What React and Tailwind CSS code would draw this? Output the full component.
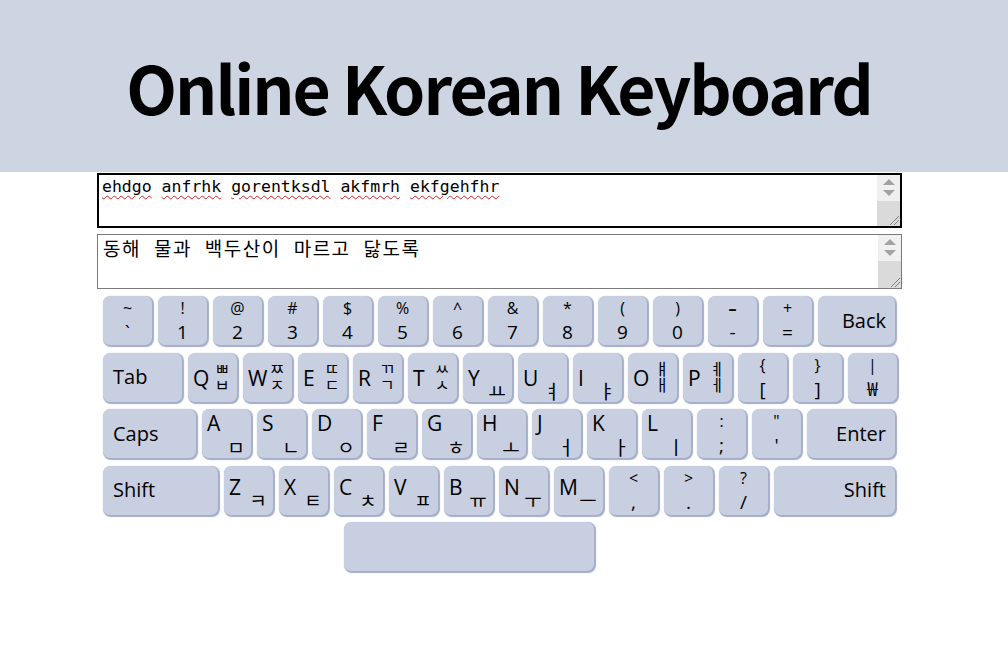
import React from 'react'

// Key geometry: 49px keys + 2px shadow, 55px pitch
const keyBase = 'h-[49px] shrink-0 rounded-[7px] bg-[#c8cfe0] shadow-[1px_1px_1px_1px_#a3adca] text-black'
const keyFont = { fontFamily: "'Open Sans', 'Noto Sans CJK KR', sans-serif" }
const jamoFont = { fontFamily: "'Noto Sans CJK KR', 'Open Sans', sans-serif" }

function SymKey({ top, bottom, topClass = '' }) {
    return (
        <div className={`${keyBase} w-[49px] flex flex-col items-center pt-[4px]`} style={keyFont}>
            <span className={`text-[16px] leading-[16px] ${topClass}`}>{top}</span>
            <span className="text-[19px] leading-[19px] mt-[7px]">{bottom}</span>
        </div>
    )
}

const letterMt = {
    pair: 'mt-[15px]',
    single: 'mt-[15px]',
    row3: 'mt-[4px]',
    row4: 'mt-[11px]',
}

// jamo column: size + offset per layout
const jamoCls = {
    pair: 'mt-[8px] text-[16px] leading-[15px] gap-[1px]',
    single: 'mt-[31px] text-[19px] leading-[14.5px]',
    row3: 'mt-[31px] text-[19px] leading-[14.5px]',
    row4: 'mt-[27px] text-[19px] leading-[14.5px]',
}

function LetterKey({ letter, top, bottom, variant }) {
    return (
        <div className={`${keyBase} w-[49px] flex`}>
            <span className={`w-[24px] shrink-0 pl-[5px] text-[21px] leading-[21px] ${letterMt[variant]}`} style={keyFont}>
                {letter}
            </span>
            <span className={`w-[20px] shrink-0 flex flex-col items-center ${jamoCls[variant]}`} style={jamoFont}>
                {top && <span>{top}</span>}
                <span>{bottom}</span>
            </span>
        </div>
    )
}

function WideKey({ label, width, right }) {
    return (
        <div
            className={`${keyBase} ${width} flex items-center text-[20px] ${right ? 'justify-end pr-[9px]' : 'pl-[10px]'}`}
            style={keyFont}
        >
            {label}
        </div>
    )
}

// fake textarea scrollbar + resize grip
function Scrollbar() {
    return (
        <div className="w-[23px] shrink-0 flex flex-col bg-[#f0f0f0]">
            <div className="flex flex-col items-center gap-[5px] pt-[4px] h-[26px]">
                <div className="w-0 h-0 border-l-[6px] border-r-[6px] border-b-[6px] border-l-transparent border-r-transparent border-b-[#a3a3a3]"></div>
                <div className="w-0 h-0 border-l-[6px] border-r-[6px] border-t-[6px] border-l-transparent border-r-transparent border-t-[#a3a3a3]"></div>
            </div>
            <div className="flex-1 bg-[#dadada] flex items-end justify-end">
                <svg width="12" height="12" viewBox="0 0 12 12">
                    <path d="M11 2 L2 11 M11 6 L6 11" stroke="#808080" strokeWidth="1" />
                </svg>
            </div>
        </div>
    )
}

const row2 = [
    ['Q', 'ㅃ', 'ㅂ', 'pair'],
    ['W', 'ㅉ', 'ㅈ', 'pair'],
    ['E', 'ㄸ', 'ㄷ', 'pair'],
    ['R', 'ㄲ', 'ㄱ', 'pair'],
    ['T', 'ㅆ', 'ㅅ', 'pair'],
    ['Y', null, 'ㅛ', 'single'],
    ['U', null, 'ㅕ', 'single'],
    ['I', null, 'ㅑ', 'single'],
    ['O', 'ㅒ', 'ㅐ', 'pair'],
    ['P', 'ㅖ', 'ㅔ', 'pair'],
]

const row3 = [['A', 'ㅁ'], ['S', 'ㄴ'], ['D', 'ㅇ'], ['F', 'ㄹ'], ['G', 'ㅎ'], ['H', 'ㅗ'], ['J', 'ㅓ'], ['K', 'ㅏ'], ['L', 'ㅣ']]
const row4 = [['Z', 'ㅋ'], ['X', 'ㅌ'], ['C', 'ㅊ'], ['V', 'ㅍ'], ['B', 'ㅠ'], ['N', 'ㅜ'], ['M', 'ㅡ']]

const numbers = [
    ['~', '`'], ['!', '1'], ['@', '2'], ['#', '3'], ['$', '4'], ['%', '5'], ['^', '6'],
    ['&', '7'], ['*', '8'], ['(', '9'], [')', '0'],
]

const latinWords = ['ehdgo', 'anfrhk', 'gorentksdl', 'akfmrh', 'ekfgehfhr']

export default function App() {
    return (
        <div className="min-h-[645px] bg-white">
            <header className="h-[172px] bg-[#ced5e2] flex items-center justify-center pr-[10px]">
                <h1
                    className="text-[66px] font-bold text-black leading-none tracking-[-2px]"
                    style={{ fontFamily: "'Noto Sans CJK KR', 'Open Sans', sans-serif" }}
                >
                    Online Korean Keyboard
                </h1>
            </header>

            {/* Input boxes */}
            <div className="ml-[97px] w-[805px] mt-[1px] flex flex-col gap-[6px]">
                <div className="h-[55px] border-2 border-black flex bg-white">
                    <div
                        className="flex-1 px-[3px] pt-[1px] text-[16.5px] leading-[22px] text-black"
                        style={{ fontFamily: "'DejaVu Sans Mono', 'Noto Sans CJK KR', monospace" }}
                    >
                        {latinWords.map((w, i) => (
                            <React.Fragment key={w}>
                                <span className="underline decoration-wavy decoration-[#e0201f] decoration-1 underline-offset-[3px]">{w}</span>
                                {i < latinWords.length - 1 ? ' ' : ''}
                            </React.Fragment>
                        ))}
                    </div>
                    <Scrollbar />
                </div>
                <div className="h-[55px] border border-[#7a7a7a] flex bg-white">
                    <div
                        className="flex-1 px-[5px] pt-[2px] text-[19px] leading-[24px] tracking-[1.5px] text-black"
                        style={{ fontFamily: "'DejaVu Sans Mono', 'Noto Sans CJK KR', monospace" }}
                    >
                        동해 물과 백두산이 마르고 닳도록
                    </div>
                    <Scrollbar />
                </div>
            </div>

            {/* Keyboard */}
            <div className="ml-[103px] w-[800px] mt-[7px] flex flex-col gap-[7.5px]">
                <div className="flex gap-[6px]">
                    {numbers.map(([t, b]) => <SymKey key={t} top={t} bottom={b} />)}
                    <SymKey top="–" bottom="-" topClass="font-bold" />
                    <SymKey top="+" bottom="=" />
                    <WideKey label="Back" width="w-[77px]" right />
                </div>
                <div className="flex gap-[6px]">
                    <WideKey label="Tab" width="w-[79px]" />
                    {row2.map(([l, t, b, v]) => <LetterKey key={l} letter={l} top={t} bottom={b} variant={v} />)}
                    <SymKey top="{" bottom="[" />
                    <SymKey top="}" bottom="]" />
                    <SymKey top="|" bottom="₩" />
                </div>
                <div className="flex gap-[6px]">
                    <WideKey label="Caps" width="w-[93px]" />
                    {row3.map(([l, b]) => <LetterKey key={l} letter={l} bottom={b} variant="row3" />)}
                    <SymKey top=":" bottom=";" />
                    <SymKey top={'"'} bottom="'" />
                    <WideKey label="Enter" width="w-[88px]" right />
                </div>
                <div className="flex gap-[6px]">
                    <WideKey label="Shift" width="w-[115px]" />
                    {row4.map(([l, b]) => <LetterKey key={l} letter={l} bottom={b} variant="row4" />)}
                    <SymKey top="<" bottom="," />
                    <SymKey top=">" bottom="." />
                    <SymKey top="?" bottom="/" />
                    <WideKey label="Shift" width="w-[121px]" right />
                </div>
                <div className="flex">
                    <div className={`${keyBase} w-[250px] ml-[241px]`}></div>
                </div>
            </div>
        </div>
    )
}
